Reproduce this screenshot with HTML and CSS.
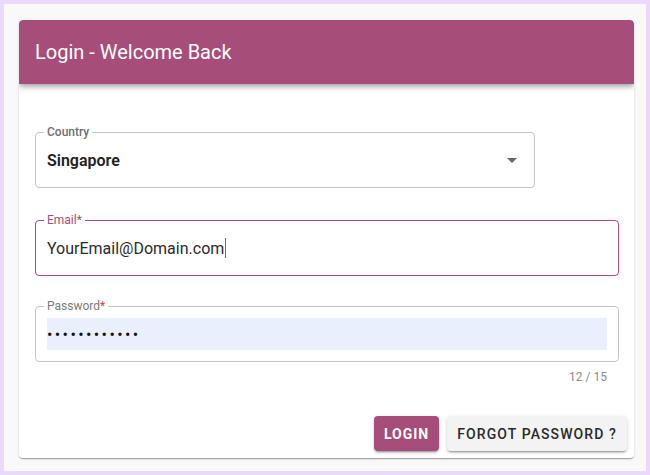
FILE: index.html
```html
<!DOCTYPE html>
<html>
<head>
<meta charset="utf-8">
<link rel="stylesheet" href="styles.css">
</head>
<body>
<div class="frame">
  <div class="card">
    <div class="card-header">Login - Welcome Back</div>
    <div class="card-body">
      <fieldset class="field field-select">
        <legend class="label">Country</legend>
        <div class="control">
          <span class="value value-bold">Singapore</span>
          <span class="arrow"></span>
        </div>
      </fieldset>
      <fieldset class="field field-focused">
        <legend class="label label-focused">Email*</legend>
        <div class="control">
          <span class="value">YourEmail@Domain.com</span><span class="caret"></span>
        </div>
      </fieldset>
      <fieldset class="field field-password">
        <legend class="label">Password<span class="req">*</span></legend>
        <div class="control control-autofill">
          <span class="dots">••••••••••••</span>
        </div>
      </fieldset>
      <div class="counter">12 / 15</div>
    </div>
    <div class="card-actions">
      <button class="btn btn-primary">LOGIN</button>
      <button class="btn btn-secondary">FORGOT PASSWORD ?</button>
    </div>
  </div>
</div>
</body>
</html>
```

FILE: styles.css
```css
* { box-sizing: border-box; }
html, body { margin: 0; padding: 0; }
body {
  width: 650px;
  height: 475px;
  background: #ead8fd;
  font-family: Roboto, "Liberation Sans", sans-serif;
  padding: 4px;
}
.frame {
  height: 467px;
  background: #f9f9f9;
  padding: 16px 12px 0 15px;
}
.card {
  width: 615px;
  height: 438px;
  background: #fff;
  border-radius: 4px;
  box-shadow: 0 2px 1px -1px rgba(0,0,0,0.2), 0 1px 1px 0 rgba(0,0,0,0.14), 0 1px 3px 0 rgba(0,0,0,0.12);
  display: flex;
  flex-direction: column;
  overflow: hidden;
}
.card-header {
  height: 64px;
  flex: none;
  background: #a64d79;
  color: #fff;
  font-size: 20px;
  line-height: 64px;
  padding-left: 16px;
  border-radius: 4px 4px 0 0;
  box-shadow: 0 2px 4px -1px rgba(0,0,0,0.2), 0 4px 5px 0 rgba(0,0,0,0.14), 0 1px 10px 0 rgba(0,0,0,0.12);
  position: relative;
  z-index: 1;
}
.card-body {
  padding: 41px 15px 0 16px;
  flex: 1;
}
.field {
  margin: 0;
  border: 1px solid #c4c4c4;
  border-radius: 4px;
  padding: 0 11px 11px 11px;
  min-width: 0;
}
.field-focused { margin-top: 25px; }
.field-password { margin-top: 23px; }
.field-select { width: 500px; }
.field-focused { border-color: #a64d79; }
.label {
  font-size: 12px;
  line-height: 14px;
  padding: 0 3px;
  margin-left: -3px;
  color: #6e6e6e;
  font-weight: 500;
}
.field-password .label { font-weight: 400; color: #7a7a7a; }
.label-focused { color: #a64d79; font-weight: 400; }
.req { color: #e53935; }
.control {
  margin-top: 5px;
  height: 32px;
  display: flex;
  align-items: center;
}
.value {
  font-size: 16px;
  color: #2b2b2b;
}
.value-bold { font-weight: 600; color: #222; }
.caret {
  display: inline-block;
  width: 1px;
  height: 20px;
  background: #a64d79;
  margin-left: 1px;
}
.arrow {
  margin-left: auto;
  margin-right: 6px;
  width: 0;
  height: 0;
  border-left: 5px solid transparent;
  border-right: 5px solid transparent;
  border-top: 5px solid #666;
}
.control-autofill {
  background: #e8f0fe;
}
.dots {
  font-size: 16px;
  letter-spacing: 2.4px;
  color: #111;
}
.counter {
  text-align: right;
  font-size: 12px;
  color: #8a8a8a;
  padding: 3px 12px 0 0;
  line-height: 24px;
}
.card-actions {
  display: flex;
  justify-content: flex-end;
  gap: 8px;
  padding: 0 7px 7px 0;
}
.btn {
  font-family: Roboto, "Liberation Sans", sans-serif;
  border: none;
  border-radius: 4px;
  height: 35px;
  font-size: 14px;
  font-weight: 500;
  letter-spacing: 1.1px;
  padding: 0 10px;
  box-shadow: 0 3px 1px -2px rgba(0,0,0,0.2), 0 2px 2px 0 rgba(0,0,0,0.14), 0 1px 5px 0 rgba(0,0,0,0.12);
}
.btn-primary {
  background: #a64d79;
  color: #fff;
  font-weight: 700;
  letter-spacing: 1px;
}
.btn-secondary {
  background: #f3f3f3;
  color: #2a2a2a;
}
```
